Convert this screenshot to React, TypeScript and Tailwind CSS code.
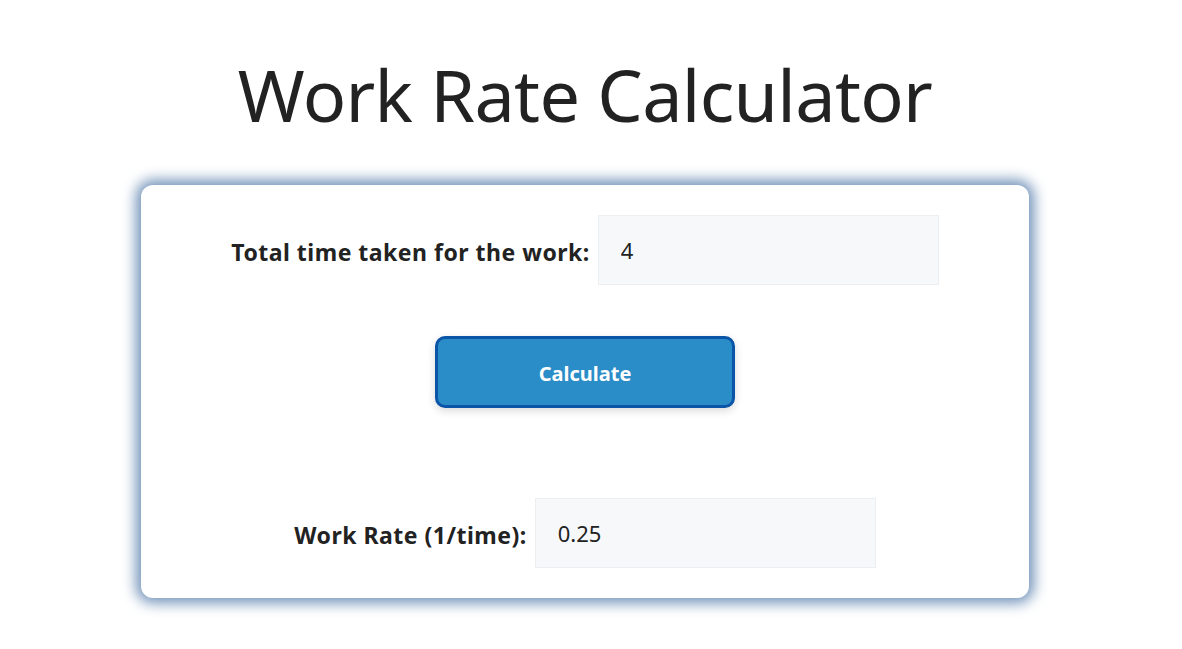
import * as React from "react";

export default function App() {
  const [time, setTime] = React.useState("4");
  const [rate, setRate] = React.useState("0.25");

  const calculate = () => {
    const t = parseFloat(time);
    setRate(t ? String(1 / t) : "");
  };

  return (
    <div className="min-h-[649px] bg-white pr-[12px] font-['Noto_Sans',sans-serif] text-[#222]">
      {/* Title */}
      <h1 className="pt-[44px] text-center text-[72px] leading-[100px] font-normal tracking-[-0.7px]">
        Work Rate Calculator
      </h1>

      {/* Card */}
      <div className="mx-auto mt-[41px] w-[888px] rounded-xl bg-white px-8 py-[30px] shadow-[0_0_14px_5px_rgba(112,145,184,1)]">
        <div className="flex items-center justify-center gap-2">
          <label className="pt-[4px] text-[23px] font-bold tracking-[0.5px]">Total time taken for the work:</label>
          <input
            value={time}
            onChange={e => setTime(e.target.value)}
            className="h-[70px] w-[341px] border border-[#eceff2] bg-[#f6f8fa] px-[22px] text-[22px] text-[#222] outline-none"
          />
        </div>

        <div className="mt-[51px] flex justify-center">
          <button
            onClick={calculate}
            className="h-[72px] w-[300px] rounded-[10px] border-[3px] border-[#0b55a8] bg-[#2b8dc8] pt-[3px] text-[20px] font-bold text-white shadow-[0_3px_8px_rgba(0,0,0,0.15)]"
          >
            Calculate
          </button>
        </div>

        <div className="mt-[90px] flex items-center justify-center gap-2">
          <label className="pt-[4px] text-[23px] font-bold tracking-[0.5px]">Work Rate (1/time):</label>
          <input
            value={rate}
            readOnly
            className="h-[70px] w-[341px] border border-[#eceff2] bg-[#f6f8fa] px-[22px] text-[22px] text-[#222] outline-none"
          />
        </div>
      </div>
    </div>
  );
}
